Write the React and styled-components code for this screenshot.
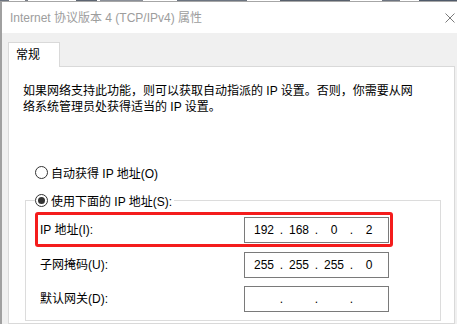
import React from 'react'
import styled, {createGlobalStyle} from "styled-components";

const GlobalStyle = createGlobalStyle`
    html, body {
        margin: 0;
        padding: 0;
        background: #f0f0f0;
    }
    * {
        box-sizing: border-box;
    }
`;

const Screen = styled.div`
    width: 457px;
    height: 324px;
    overflow: hidden;
    background: #f0f0f0;
    font-family: "Liberation Sans", "Noto Sans CJK SC", sans-serif;
    font-size: 12px;
    color: #000;
`;

// remnants of the window behind the dialog
const BehindStrip = styled.div`
    height: 1px;
    background: linear-gradient(to right,
        #6d7480 0 9px, #fff 9px 25px, #7a7f88 25px 28px, #fff 28px 76px,
        #5d6572 76px 97px, #fff 97px 100px, #8a8f98 100px 143px, #fff 143px 177px,
        #6c7480 177px 247px, #fff 247px 280px, #58606c 280px 350px, #fff 350px 382px,
        #6d7480 382px 400px, #fff 400px 419px, #4f5a6a 419px 457px);
`;

const Dialog = styled.div`
    border-top: 1px solid #a6a6a6;
    border-left: 2px solid #a0a0a0;
    height: 323px;
    display: flex;
    flex-direction: column;
`;

const TitleBar = styled.div`
    height: 31px;
    flex-shrink: 0;
    background: #fff;
    display: flex;
    align-items: center;
    justify-content: space-between;
    padding: 0 2px 0 8px;
`;

const Title = styled.span`
    color: #9d9d9d;
    font-size: 12px;
    line-height: 16px;
    margin-top: 1px;
`;

const CloseButton = styled.span`
    display: flex;
    width: 10px;
    height: 10px;
`;

const Body = styled.div`
    flex: 1;
    padding: 9px 1px 0 6px;
    display: flex;
    flex-direction: column;
`;

const TabStrip = styled.div`
    display: flex;
    position: relative;
    z-index: 1;
    margin-bottom: -1px;
`;

const Tab = styled.div`
    width: 52px;
    height: 25px;
    padding: 4px 0 0 7px;
    line-height: 16px;
    background: #fff;
    border: 1px solid #d9d9d9;
    border-bottom: none;
`;

const Panel = styled.div`
    flex: 1;
    width: 447px;
    background: #fff;
    border: 1px solid #d9d9d9;
    padding: 16px 0 0 14px;
`;

const Description = styled.p`
    margin: 0;
    line-height: 16px;
`;

const RadioRow = styled.label`
    display: flex;
    align-items: center;
    height: 20px;
    white-space: nowrap;
`;

const StandaloneRadio = styled(RadioRow)`
    margin: 47px 0 0 12px;
`;

const RadioCircle = styled.span`
    width: 13px;
    height: 13px;
    border-radius: 50%;
    border: 1px solid #333;
    background: #fff;
    margin-right: 3px;
    display: flex;
    align-items: center;
    justify-content: center;

    &::after {
        content: "";
        width: 7px;
        height: 7px;
        border-radius: 50%;
        background: ${props => props.checked ? "#333" : "transparent"};
    }
`;

const GroupBox = styled.fieldset`
    margin: 8px 0 0 2px;
    width: 416px;
    padding: 2px 47px 8px 9px;
    border: 1px solid #dcdcdc;
    min-inline-size: 0;
`;

const GroupLegend = styled.legend`
    padding: 0 2px 0 0;
    margin: 0;
`;

const Rows = styled.div`
    display: flex;
    flex-direction: column;
    gap: 8px;
`;

const FieldRow = styled.div`
    display: flex;
    align-items: center;
    justify-content: space-between;
    padding: ${props => props.highlighted ? "2px 1px 1px 2px" : "0 4px 0 5px"};
    border: ${props => props.highlighted ? "3px solid #f41c1c" : "none"};
    border-radius: ${props => props.highlighted ? "3px" : "0"};
    margin-bottom: ${props => props.highlighted ? "-3px" : "0"};
`;

const FieldLabel = styled.span`
    line-height: 16px;
`;

const IpBox = styled.div`
    width: 145px;
    height: 26px;
    border: 1px solid #7a7a7a;
    background: #fff;
    display: grid;
    grid-template-columns: 26px 9px 26px 9px 26px 9px 26px;
    align-items: center;
    padding-left: 6px;
    line-height: 16px;
`;

const Octet = styled.span`
    text-align: center;
`;

const Dot = styled.span`
    text-align: center;
`;

const IpInput = ({value}) => {
    const parts = value.split(".");
    return (
        <IpBox>
            {parts.map((part, i) => (
                <React.Fragment key={i}>
                    {i > 0 && <Dot>.</Dot>}
                    <Octet>{part}</Octet>
                </React.Fragment>
            ))}
        </IpBox>
    )
}

const fields = [
    {label: "IP 地址(I):", value: "192.168.0.2", highlighted: true},
    {label: "子网掩码(U):", value: "255.255.255.0"},
    {label: "默认网关(D):", value: "..."},
];

const App = () => {
    return (
        <Screen>
            <GlobalStyle/>
            <BehindStrip/>
            <Dialog>
                <TitleBar>
                    <Title>Internet 协议版本 4 (TCP/IPv4) 属性</Title>
                    <CloseButton>
                        <svg width="10" height="10" viewBox="0 0 10 10">
                            <path d="M0.5 0.5 L9.5 9.5 M9.5 0.5 L0.5 9.5" stroke="#7a7a7a" strokeWidth="1" fill="none"/>
                        </svg>
                    </CloseButton>
                </TitleBar>
                <Body>
                    <TabStrip>
                        <Tab>常规</Tab>
                    </TabStrip>
                    <Panel>
                        <Description>
                            如果网络支持此功能，则可以获取自动指派的 IP 设置。否则，你需要从网<br/>
                            络系统管理员处获得适当的 IP 设置。
                        </Description>
                        <StandaloneRadio>
                            <RadioCircle/>
                            自动获得 IP 地址(O)
                        </StandaloneRadio>
                        <GroupBox>
                            <GroupLegend>
                                <RadioRow>
                                    <RadioCircle checked/>
                                    使用下面的 IP 地址(S):
                                </RadioRow>
                            </GroupLegend>
                            <Rows>
                                {fields.map(field => (
                                    <FieldRow key={field.label} highlighted={field.highlighted}>
                                        <FieldLabel>{field.label}</FieldLabel>
                                        <IpInput value={field.value}/>
                                    </FieldRow>
                                ))}
                            </Rows>
                        </GroupBox>
                    </Panel>
                </Body>
            </Dialog>
        </Screen>
    )
}

export default App
